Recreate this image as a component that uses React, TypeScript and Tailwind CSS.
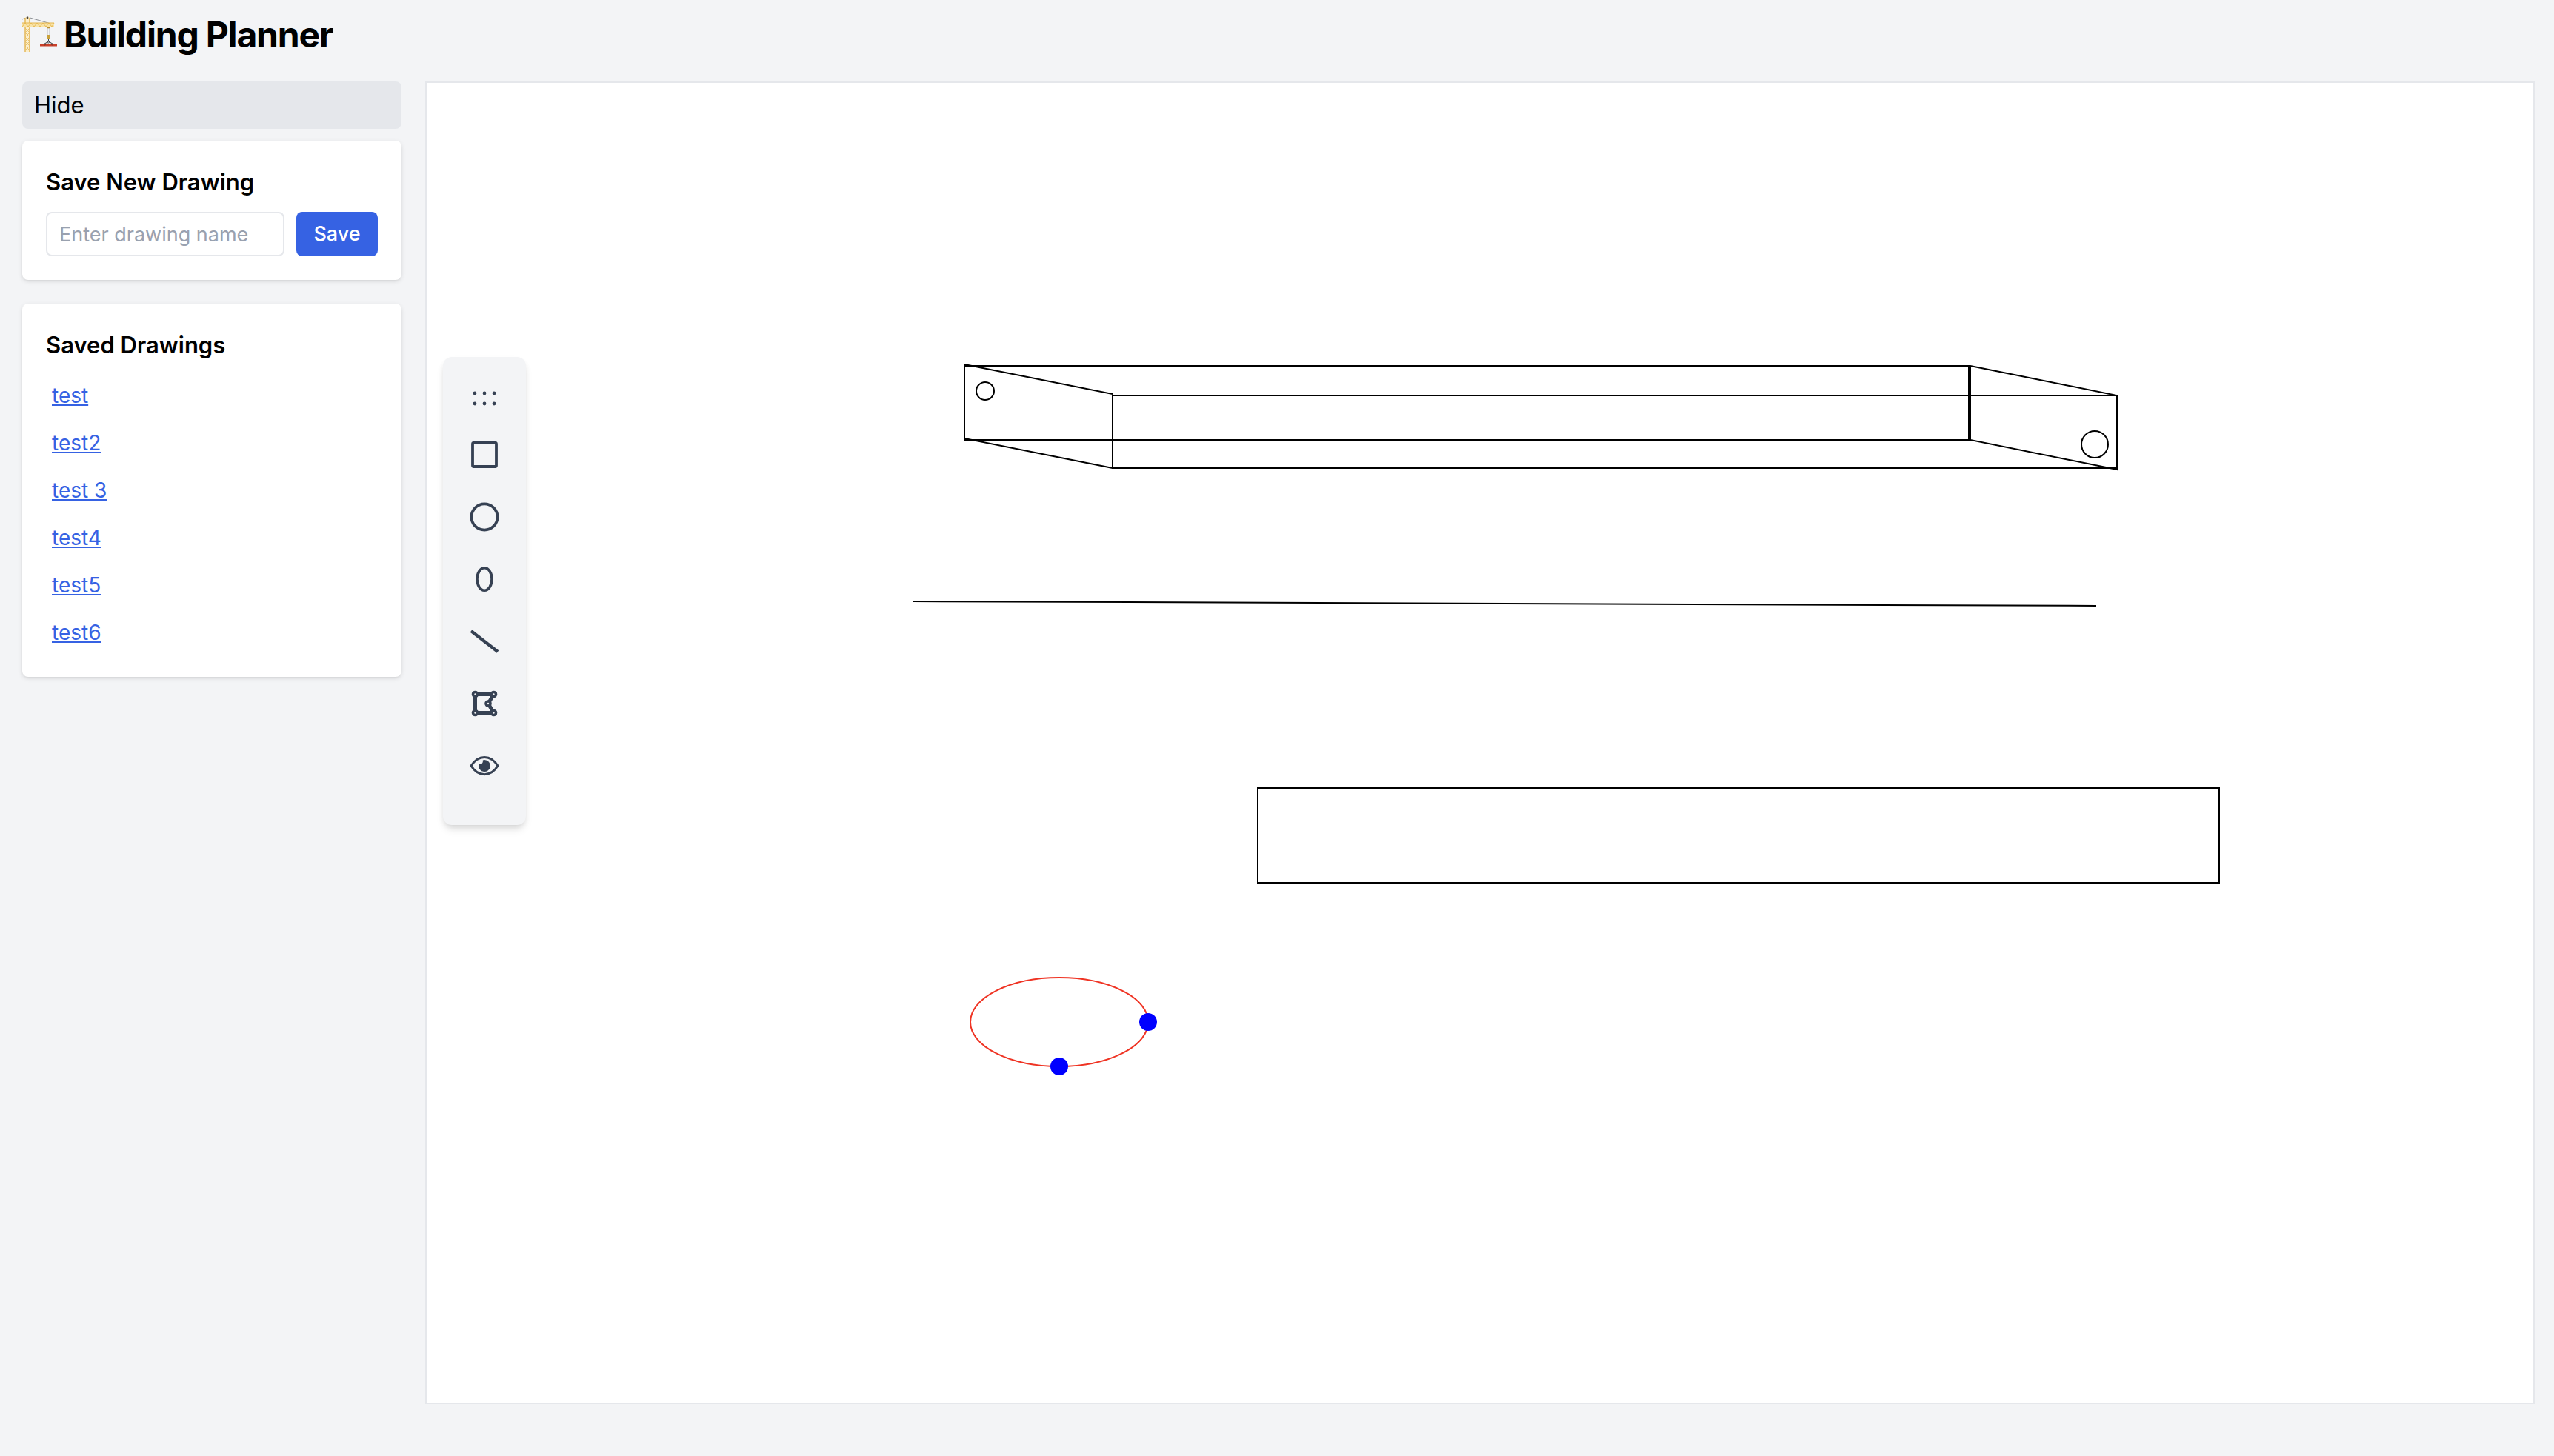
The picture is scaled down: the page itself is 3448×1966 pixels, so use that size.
import React, { useState } from "react";

const drawings = ["test", "test2", "test 3", "test4", "test5", "test6"];

function CraneIcon() {
  return (
    <svg viewBox="0 0 48 48" className="h-12 w-12 shrink-0" fill="none" aria-hidden="true">
      <path d="M0 4 7 1l35 10" stroke="#8b8f94" strokeWidth="1" />
      <path d="M4 1h6v53H4z" fill="#fbeecb" />
      <path d="M4 2v46M10 2v46" stroke="#e3b551" strokeWidth="1.4" />
      <path d="M4 10h6M4 16l6 6-6 6 6 6-6 6 6 6M10 16l-6 6 6 6-6 6 6 6-6 6" stroke="#e6bd63" strokeWidth="0.9" />
      <path d="M0 9h43v5.500H0z" fill="#f8e3a8" />
      <path d="M0 9h43M0 14.500h43" stroke="#e5b64c" strokeWidth="1.200" />
      <path d="m0 14 4-5 4 5 4-5 4 5 4-5 4 5 4-5 4 5 4-5 4 5 3-5" stroke="#e5b64c" strokeWidth="0.9" />
      <circle cx="7" cy="2" r="1.400" fill="#4a4438" />
      <path d="M33 15.500h5" stroke="#b98d2e" strokeWidth="1.600" />
      <path d="M34 16v10M37 16v10" stroke="#a9adb2" strokeWidth="0.8" />
      <path d="M34 25h3v5h-3z" fill="#c9a23c" />
      <path d="M35.500 30v3c2 1 1.500 3 0 3s-1.500-1-1.500-1.500M35.500 34l-7 4M35.500 34l7 4" stroke="#3c4148" strokeWidth="1" />
      <path d="M24 37h23v3.500H24z" fill="#c8402a" />
      <path d="m29 40 4-3M42 40l-4-3" stroke="#6b2b22" strokeWidth="0.9" />
    </svg>
  );
}

function Svg({ children }: { children: React.ReactNode }) {
  return (
    <svg viewBox="0 0 40 40" className="size-10" fill="none" stroke="currentColor" strokeWidth="4" aria-hidden="true">
      {children}
    </svg>
  );
}

const tools = [
  {
    name: "Rectangle",
    icon: <rect x="4" y="4" width="32" height="32" rx="1.500" strokeWidth="3.800" />,
  },
  { name: "Circle", icon: <circle cx="20" cy="20" r="17.600" strokeWidth="3.800" /> },
  { name: "Ellipse", icon: <ellipse cx="20" cy="20" rx="10" ry="15.300" strokeWidth="3.600" /> },
  { name: "Line", icon: <path d="M2 6 38 34" strokeWidth="4.200" /> },
  {
    name: "Polygon",
    icon: (
      <>
        <path d="M7.500 7.500h25l-7.500 12.500 7.500 12.500h-25z" strokeWidth="5" />
        <g fill="#f3f4f6" strokeWidth="3.600">
          <circle cx="7.500" cy="7.500" r="3" />
          <circle cx="32.500" cy="7.500" r="3" />
          <circle cx="25" cy="20" r="3" />
          <circle cx="7.500" cy="32.500" r="3" />
          <circle cx="32.500" cy="32.500" r="3" />
        </g>
      </>
    ),
  },
  {
    name: "Preview",
    icon: (
      <>
        <path d="M2 20C11.500 4.500 28.500 4.500 38 20 28.500 35.500 11.500 35.500 2 20Z" strokeWidth="3" strokeLinejoin="round" />
        <path d="M20 12a8 8 0 1 1-7.600 5.500c2.600 1.400 6.200-.8 5.400-5.100A8 8 0 0 1 20 12Z" fill="currentColor" stroke="none" />
      </>
    ),
  },
];

function Toolbar() {
  return (
    <div
      role="toolbar"
      aria-label="Drawing tools"
      className="absolute top-[370px] left-[22px] flex w-28 flex-col items-center rounded-xl bg-gray-100 pt-[22px] pb-[38px] text-gray-700 shadow-[0_8px_12px_-2px_rgba(0,0,0,0.1),0_4px_8px_-2px_rgba(0,0,0,0.1)]"
    >
      <button type="button" aria-label="Move toolbar" className="flex h-17 w-20 items-center justify-center">
        <svg viewBox="0 0 40 40" className="size-10" fill="currentColor" aria-hidden="true">
          {[7, 20, 33].map((x) => (
            <g key={x}>
              <circle cx={x} cy="13" r="2.400" />
              <circle cx={x} cy="27" r="2.400" />
            </g>
          ))}
        </svg>
      </button>
      {tools.map((t) => (
        <button key={t.name} type="button" aria-label={t.name} className="flex h-21 w-20 items-center justify-center">
          <Svg>{t.icon}</Svg>
        </button>
      ))}
    </div>
  );
}

function Drawing() {
  return (
    <svg viewBox="576 112 2844 1782" className="block w-full" fill="none" stroke="#000" strokeWidth="2" role="img" aria-label="Drawing canvas">
      <rect x="1302" y="494" width="1356" height="100" />
      <rect x="1502" y="534" width="1356" height="98" />
      <path d="M1302 492 1502 532V632L1302 592Z" />
      <path d="M2660 494 2858 534V634L2660 594Z" />
      <circle cx="1330" cy="528" r="12" />
      <circle cx="2828" cy="600" r="18" />
      <path d="M1232 812 2830 818" />
      <rect x="1698" y="1064" width="1298" height="128" />
      <ellipse cx="1430" cy="1380" rx="120" ry="60" stroke="#ef3323" />
      <circle cx="1550" cy="1380" r="12" fill="#0000ff" stroke="none" />
      <circle cx="1430" cy="1440" r="12" fill="#0000ff" stroke="none" />
    </svg>
  );
}

export default function App() {
  const [name, setName] = useState("");
  return (
    <div className="min-h-screen bg-gray-100 pr-[26px] pl-[30px] font-[Inter,sans-serif] text-black">
      <header className="flex h-[110px] items-start gap-2 pt-[22px]">
        <CraneIcon />
        <h1 className="text-[48px] leading-[50px] font-bold tracking-tight">Building Planner</h1>
      </header>
      <div className="flex items-start gap-8">
        <aside className="w-[512px] shrink-0">
          <button type="button" className="mb-4 block w-full rounded-lg bg-gray-200 px-4 py-2 text-left text-[31px] leading-[48px]">
            Hide
          </button>
          <form
            onSubmit={(e) => e.preventDefault()}
            className="mb-8 rounded-lg bg-white p-8 shadow-[0_2px_6px_rgba(0,0,0,0.1),0_2px_4px_-2px_rgba(0,0,0,0.1)]"
          >
            <label htmlFor="drawing-name" className="mb-4 block text-[31px] leading-[48px] font-semibold">
              Save New Drawing
            </label>
            <div className="flex gap-4">
              <input
                id="drawing-name"
                value={name}
                onChange={(e) => setName(e.target.value)}
                placeholder="Enter drawing name"
                className="h-[60px] min-w-0 flex-1 rounded-lg border-2 border-gray-200 px-4 text-[27px] placeholder:text-gray-400"
              />
              <button type="submit" className="h-[60px] w-[110px] rounded-lg bg-[#3662e3] text-[27px] font-medium text-white">
                Save
              </button>
            </div>
          </form>
          <section className="rounded-lg bg-white px-8 pt-8 pb-7 shadow-[0_2px_6px_rgba(0,0,0,0.1),0_2px_4px_-2px_rgba(0,0,0,0.1)]">
            <h2 className="mb-3 text-[31px] leading-[48px] font-semibold">Saved Drawings</h2>
            <ul>
              {drawings.map((d) => (
                <li key={d} className="px-2 py-3 text-[28px] leading-10">
                  <a href="#" className="text-[#3662e3] underline">
                    {d}
                  </a>
                </li>
              ))}
            </ul>
          </section>
        </aside>
        <main className="relative min-w-0 flex-1 border-2 border-gray-200 bg-white">
          <Drawing />
          <Toolbar />
        </main>
      </div>
    </div>
  );
}
